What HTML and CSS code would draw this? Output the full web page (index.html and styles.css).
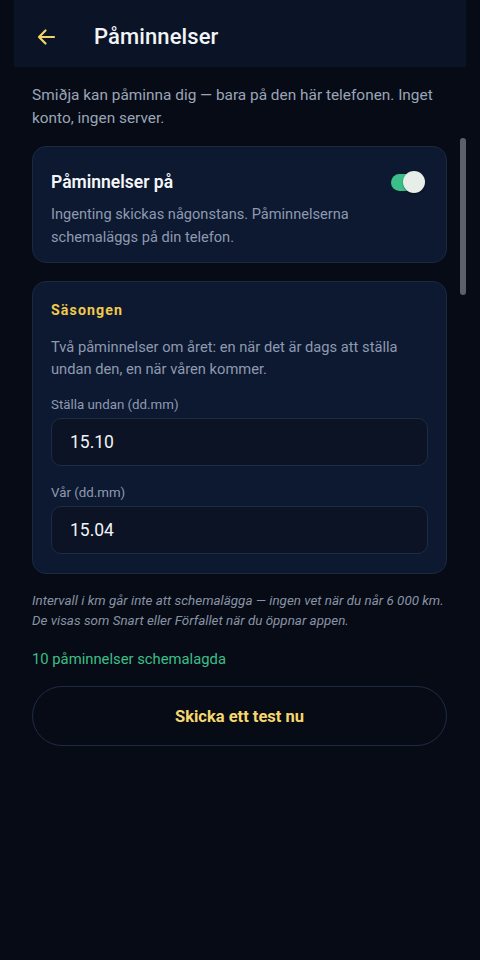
FILE: index.html
```html
<!DOCTYPE html>
<html lang="sv">
<head>
<meta charset="utf-8">
<link rel="stylesheet" href="styles.css">
</head>
<body>
<div class="screen">
  <header class="topbar">
    <svg class="back" width="20" height="20" viewBox="0 0 20 20"><path d="M18 10H3M9.5 3.5L3 10l6.5 6.5" fill="none" stroke="#f2d46a" stroke-width="2.2" stroke-linecap="round" stroke-linejoin="round"/></svg>
    <h1 class="title">Påminnelser</h1>
  </header>
  <main class="content">
    <p class="intro">Smiðja kan påminna dig — bara på den här telefonen. Inget konto, ingen server.</p>
    <section class="card">
      <div class="row">
        <h2 class="card-title">Påminnelser på</h2>
        <div class="toggle"><span class="knob"></span></div>
      </div>
      <p class="card-text">Ingenting skickas någonstans. Påminnelserna schemaläggs på din telefon.</p>
    </section>
    <section class="card season">
      <h3 class="eyebrow">Säsongen</h3>
      <p class="card-text">Två påminnelser om året: en när det är dags att ställa undan den, en när våren kommer.</p>
      <label class="label">Ställa undan (dd.mm)</label>
      <div class="input">15.10</div>
      <label class="label">Vår (dd.mm)</label>
      <div class="input">15.04</div>
    </section>
    <p class="note">Intervall i km går inte att schemalägga — ingen vet när du når 6 000 km. De visas som Snart eller Förfallet när du öppnar appen.</p>
    <p class="status">10 påminnelser schemalagda</p>
    <button class="btn">Skicka ett test nu</button>
  </main>
  <div class="scrollbar"></div>
</div>
</body>
</html>
```
FILE: styles.css
```css
* { box-sizing: border-box; margin: 0; padding: 0; }
html, body { width: 480px; height: 960px; background: #060a13; }
body { font-family: Roboto, "Noto Sans", sans-serif; color: #e8ecf2; }
.screen { position: relative; width: 480px; height: 960px; background: #070b15; overflow: hidden; }
.topbar {
  margin: 0 14px;
  height: 67px;
  background: #0b1426;
  display: flex;
  align-items: center;
  padding-left: 22px;
  padding-top: 5px;
  gap: 38px;
}
.back { flex: none; margin-top: 1px; }
.title { font-size: 22px; font-weight: 500; color: #f2f4f8; letter-spacing: 0.1px; }
.content { padding: 17px 33px 0 32px; display: flex; flex-direction: column; }
.intro { font-size: 15.4px; line-height: 23px; color: #9aa5b8; }
.card {
  margin-top: 16px;
  background: #0d1930;
  border: 1px solid #1b2842;
  border-radius: 14px;
  padding: 24px 18px 13px 18px;
}
.row { display: flex; align-items: center; justify-content: space-between; height: 22px; }
.card-title { font-size: 17.5px; font-weight: 600; color: #f4f6fa; }
.toggle {
  position: relative;
  width: 24px; height: 17px;
  border-radius: 9px;
  background: #3bbf88;
  margin-right: 13px;
}
.knob {
  position: absolute; left: 12px; top: -3px;
  width: 22px; height: 22px; border-radius: 50%;
  background: #e7ede9;
  box-shadow: 0 1px 2px rgba(0,0,0,0.4);
}
.card-text { margin-top: 10px; font-size: 14.6px; line-height: 23px; color: #8e9ab0; }
.season { margin-top: 18px; padding: 18px 18px 19px 18px; }
.eyebrow { font-size: 14.2px; font-weight: 700; color: #f2c94c; letter-spacing: 1.1px; line-height: 20px; }
.season .card-text { margin-top: 17px; line-height: 21.5px; font-size: 14.7px; }
.label { display: block; margin-top: 16px; font-size: 13.3px; line-height: 18px; color: #8e9ab0; }
.season .label + .input { margin-top: 4px; }
.label:nth-of-type(2) { margin-top: 18px; }
.input {
  height: 48px;
  border: 1px solid #1e2b45;
  border-radius: 10px;
  background: #0b1324;
  display: flex; align-items: center;
  padding-left: 18px;
  font-size: 17.5px; color: #f1f3f7;
}
.note { margin-top: 17px; font-size: 13.4px; font-style: italic; line-height: 20px; color: #8893a6; }
.status { margin-top: 18px; font-size: 14.8px; line-height: 20px; color: #3bbf88; }
.btn {
  margin-top: 17px;
  height: 60px;
  border: 1px solid #1e2b45;
  border-radius: 30px;
  background: transparent;
  font-family: Roboto, "Noto Sans", sans-serif;
  font-size: 16.5px; font-weight: 700; color: #f5d76e;
}
.scrollbar {
  position: absolute; right: 14px; top: 138px;
  width: 6px; height: 157px;
  border-radius: 3px;
  background: #5c6068;
}
```
